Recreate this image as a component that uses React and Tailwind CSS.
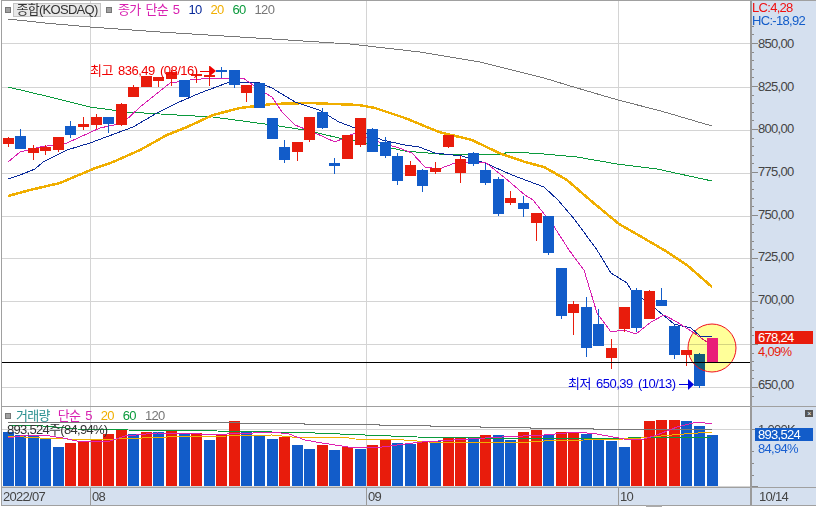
import React from "react";

const RED = "#e81c0c";
const BLUE = "#125cc9";
const left = (i) => Math.floor(3.1 + 12.57 * i);

// [bodyTop, bodyBottom, wickTop, wickBottom, colour]
const r = RED, b = BLUE;
const candles = [
  [138,143,137,146,r],[136,148,129,148,b],[148,152,145,159,r],[147,150,145,154,r],[137,149,137,151,r],
  [126,134,121,137,b],[124,126,117,129,r],[117,124,114,128,r],[117,123,117,132,b],[104,124,103,125,r],
  [87,96,85,96,r],[76,86,76,86,r],[77,80,77,86,r],[72,78,70,85,r],[80,96,80,96,b],
  [74,75,70,82,r],[75,76,66,85,r],[70,71,67,77,b],[70,84,70,87,b],[85,92,85,101,r],
  [83,107,83,107,b],[118,138,118,138,b],[147,159,140,162,b],[142,151,142,160,r],[117,139,117,141,r],
  [112,127,108,128,b],[163,165,158,173,b],[135,158,135,158,r],[118,144,118,146,r],[129,151,128,151,b],
  [142,155,137,157,b],[156,180,153,184,b],[165,175,161,175,r],[170,185,169,191,b],[168,171,162,173,r],
  [135,146,135,147,r],[159,172,156,182,r],[153,163,152,165,b],[170,182,164,184,b],[179,213,177,215,b],
  [198,202,191,204,r],[203,208,196,216,b],[213,222,213,240,r],[216,252,216,254,b],[268,315,268,318,b],
  [304,312,301,334,r],[307,347,297,356,b],[324,345,309,345,b],[348,357,339,368,r],[307,328,307,331,r],
  [290,327,288,331,b],[291,318,290,318,r],[300,305,288,305,b],[326,354,325,358,b],[350,354,350,365,r],
  [354,385,353,387,b],
];

const volTops = [
  [432,b],[435,b],[436,b],[439,b],[447,b],[443,r],[441,r],[439,r],[434,r],[429,r],
  [434,b],[432,r],[432,b],[430,r],[434,b],[433,r],[440,b],[435,r],[421,r],[432,b],
  [436,b],[439,b],[437,r],[445,b],[449,b],[445,r],[450,b],[447,r],[449,b],[445,r],
  [440,r],[443,b],[444,b],[441,r],[441,b],[437,r],[437,r],[437,b],[435,r],[435,b],
  [440,b],[432,r],[430,r],[435,b],[432,r],[432,r],[434,b],[440,b],[441,b],[447,b],
  [440,r],[421,r],[420,r],[420,r],[421,b],[426,b],[435,b],
];

const ma120 = "8,19 45,23 90,27 160,32 272,39 350,44 420,52 480,62 544,78 577,88 618,100 661,111 712,126";
const ma60 = "8,87 50,97 90,107 127,112 177,115 213,117 272,125 305,130 339,138 365,143 382,146 405,151 439,154 502,154 509,152 529,153 544,154 577,157 617,164 657,169 712,181";
const ma20 = "8,196 30,190 60,183 93,169 113,162 140,150 167,135 187,127 213,115 240,108 272,104 309,103 359,105 375,108 405,118 439,132 472,140 499,153 525,162 544,167 567,180 590,200 619,224 640,236 664,250 687,265 712,287";
const ma10 = "8,179 20,175 35,169 43,162 67,150 90,143 133,127 157,113 177,103 200,93 227,83 257,82 272,88 295,102 319,110 339,122 355,128 382,140 405,145 419,147 435,153 462,156 485,163 512,175 544,187 558,200 575,220 597,250 611,273 627,283 631,290 657,310 674,324 691,328 700,336 712,336";
const ma5 = "8,162 20,152 40,147 67,143 100,128 123,123 140,107 170,83 190,80 213,78 243,78 260,90 272,97 282,112 295,125 315,133 335,142 355,133 379,142 399,148 412,153 425,167 439,169 455,163 469,162 485,162 505,178 525,195 533,200 553,225 569,250 584,270 597,313 611,332 624,330 636,334 651,322 664,315 677,322 694,333 707,342";

const v120 = "8,422 232,422 240,423 304,423 304,424 379,424 379,425 430,425 430,426 480,426 480,427 530,427 530,428 593,428 593,429 712,429";
const v60 = "8,425 43,426 77,429 128,430 217,431 272,432 315,433 365,435 417,437 544,439 712,437";
const v20 = "8,436 40,438 67,439 117,439 167,437 227,436 272,435 292,437 342,437 355,439 404,440 429,442 492,442 529,442 544,441 624,439 641,438 661,436 684,434 712,432";
const v5 = "8,438 20,436 43,435 63,438 77,441 110,441 125,436 157,433 200,434 227,434 253,433 272,432 289,434 305,440 322,443 355,448 382,447 405,444 422,442 485,438 502,437 544,435 577,432 597,434 624,439 641,440 657,435 677,427 697,422 712,424";

const gridY = [43, 87, 130, 173, 216, 258, 301, 344, 387];
const gridX = [90, 366, 618];
const priceLabels = ["850,00", "825,00", "800,00", "775,00", "750,00", "725,00", "700,00", "675,00", "650,00"];

function Line({ points, color, width = 1 }) {
  return <polyline points={points} fill="none" stroke={color} strokeWidth={width} shapeRendering="crispEdges" />;
}

function Square() {
  return <span className="block w-[6px] h-[6px] bg-[#a0a0a0] border border-[#777] shrink-0" />;
}

function PriceChart() {
  return (
    <svg width="748" height="405" viewBox="2 1 748 405" className="block">
      <g shapeRendering="crispEdges">
        {gridY.map((y) => <rect key={y} x="2" y={y} width="748" height="1" fill="#d4d4d4" />)}
        {gridX.map((x) => <rect key={x} x={x} y="1" width="1" height="405" fill="#d4d4d4" />)}
        <rect x="2" y="362" width="748" height="1" fill="#000" />
      </g>
      <Line points={ma120} color="#777777" />
      <Line points={ma60} color="#0a9a3c" />
      <Line points={ma20} color="#f0ae00" width={2.5} />
      <Line points={ma10} color="#0a2a9a" />
      <Line points={ma5} color="#d81fb0" />
      <g shapeRendering="crispEdges">
        {candles.map(([t, bt, wt, wb, c], i) => (
          <g key={i}>
            <rect x={left(i) + 5} y={wt} width="1" height={wb - wt + 1} fill={c} />
            <rect x={left(i)} y={t} width="11" height={bt - t + 1} fill={c} />
          </g>
        ))}
      </g>
      <circle cx="712" cy="348" r="24" fill="#ffff99" className="mix-blend-multiply" />
      <circle cx="712" cy="348" r="24" fill="none" stroke="#f01020" strokeWidth="1" />
      <polyline points="691,328 700,336 712,336" fill="none" stroke="#0a2a9a" shapeRendering="crispEdges" />
      <rect x="707" y="338" width="11" height="25" fill="#e91e78" shapeRendering="crispEdges" />
      <rect x="2" y="362" width="748" height="1" fill="#000" shapeRendering="crispEdges" />
      <g fontSize="13" letterSpacing="-0.5" wordSpacing="2">
        <text x="90" y="75" fill="#f00000">최고 836,49 (08/16)</text>
        <text x="568" y="388" fill="#0000e0">최저 650,39 (10/13)</text>
      </g>
      <path d="M200 71H210" stroke="#f00000" fill="none" shapeRendering="crispEdges" />
      <path d="M210 66L216 71L210 76Z" fill="#f00000" />
      <path d="M679 384H688" stroke="#0000e0" fill="none" shapeRendering="crispEdges" />
      <path d="M688 379L694 384.500L688 390Z" fill="#0000e0" />
    </svg>
  );
}

function VolumeChart() {
  return (
    <svg width="748" height="80" viewBox="2 407 748 80" className="block">
      <g shapeRendering="crispEdges">
        <rect x="2" y="429" width="748" height="1" fill="#d4d4d4" />
        <rect x="2" y="486" width="748" height="1" fill="#d4d4d4" />
        {gridX.map((x) => <rect key={x} x={x} y="407" width="1" height="80" fill="#d4d4d4" />)}
        {volTops.map(([t, c], i) => (
          <rect key={i} x={left(i)} y={t} width="11" height={486 - t} fill={c} />
        ))}
      </g>
      <Line points={v120} color="#777777" />
      <Line points={v60} color="#0a9a3c" />
      <Line points={v20} color="#f0ae00" />
      <Line points={v5} color="#e020b0" />
    </svg>
  );
}

function PriceAxisTicks() {
  const ticks = [];
  for (let k = -2; k <= 41; k++) ticks.push(43 + k * 8.6);
  return (
    <svg width="10" height="405" viewBox="0 1 10 405" className="absolute left-0 top-0">
      <g shapeRendering="crispEdges">
        {ticks.map((y, i) => (
          <rect key={i} x="0" y={Math.round(y)} width={(i - 2) % 5 === 0 ? 6 : 2} height="1" fill="#8a8a8a" />
        ))}
      </g>
    </svg>
  );
}

export default function App() {
  return (
    <div className="w-[816px] h-[507px] overflow-hidden bg-white relative text-[13px] tracking-[-0.7px] leading-none font-['Liberation_Sans','Noto_Sans_CJK_KR',sans-serif]">
      <div className="border-t border-b border-[#a0a0a0] mb-px ml-px border-l flex flex-col">
        {/* price row */}
        <div className="flex h-[405px] border-b-0">
          <div className="relative w-[748px]">
            <PriceChart />
            <div className="absolute left-[3px] top-[1px] flex items-center h-[15px] whitespace-nowrap">
              <Square />
              <span className="ml-[2px] w-[88px] h-[14px] flex items-center justify-center bg-[#e8e8e8] border border-[#c4c4c4] text-[#333]">종합(KOSDAQ)</span>
              <span className="ml-[5px]"><Square /></span>
              <span className="ml-[6px] text-[#d81fb0] [word-spacing:2px]">종가 단순 5</span>
              <span className="ml-[9px] text-[#0a2a9a]">10</span>
              <span className="ml-[9px] text-[#f0ae00]">20</span>
              <span className="ml-[9px] text-[#0a9a3c]">60</span>
              <span className="ml-[9px] text-[#777]">120</span>
            </div>
          </div>
          <div className="relative flex-1 border-l-2 border-[#9a9a9a] bg-[#d5e0ef] flex flex-col pt-[21px] pl-[6px]">
            <PriceAxisTicks />
            <div className="absolute left-0 top-0">
              <div className="text-[#f01010] h-[13px] leading-[13px]">LC:4,28</div>
              <div className="text-[#125cc9] h-[13px] leading-[13px]">HC:-18,92</div>
            </div>
            {priceLabels.map((t, i) =>
              <div key={i} className="h-[43px] flex items-center text-[#444] whitespace-nowrap">{i === 7 ? "" : t}</div>
            )}
            <div className="absolute left-[3px] top-[330px] w-[58px] h-[13px] bg-[#e81c0c] text-white pl-[3px] flex items-center">678,24</div>
            <div className="absolute left-[6px] top-[344px] text-[#e81c0c]">4,09%</div>
          </div>
        </div>
        <div className="h-px bg-[#a0a0a0]" />
        {/* volume row */}
        <div className="flex h-[80px]">
          <div className="relative w-[748px]">
            <VolumeChart />
            <div className="absolute left-[3px] top-[2px] flex items-center h-[13px] whitespace-nowrap">
              <Square />
              <span className="ml-[5px] text-[#2a9090]">거래량</span>
              <span className="ml-[8px] text-[#d81fb0] [word-spacing:2px]">단순 5</span>
              <span className="ml-[9px] text-[#f0ae00]">20</span>
              <span className="ml-[9px] text-[#0a9a3c]">60</span>
              <span className="ml-[9px] text-[#777]">120</span>
            </div>
            <div className="absolute left-[5px] top-[16px] text-[#333] whitespace-nowrap">893,524주(84,94%)</div>
          </div>
          <div className="relative flex-1 border-l-2 border-[#9a9a9a] bg-[#d5e0ef] overflow-hidden">
            <span className="absolute right-[3px] top-[3px] w-[8px] h-[7px] bg-[#555] text-white text-[7px] leading-[7px] text-center">×</span>
            <span className="absolute left-[6px] top-[16px] text-[#444]">1,000K</span>
            <span className="absolute left-0 top-[22px] w-[6px] h-px bg-[#8a8a8a]" />
            <span className="absolute left-0 top-[44px] w-[2px] h-px bg-[#8a8a8a]" />
            <span className="absolute left-0 top-[56px] w-[2px] h-px bg-[#8a8a8a]" />
            <span className="absolute left-0 top-[68px] w-[2px] h-px bg-[#8a8a8a]" />
            <span className="absolute left-0 top-[79px] w-[6px] h-px bg-[#8a8a8a]" />
            <div className="absolute left-[3px] top-[21px] w-[58px] h-[13px] bg-[#125cc9] text-white pl-[3px] flex items-center">893,524</div>
            <div className="absolute left-[6px] top-[35px] text-[#1a60d0]">84,94%</div>
          </div>
        </div>
        <div className="h-px bg-[#a0a0a0]" />
        {/* time row */}
        <div className="flex h-[17px] bg-[#d5e0ef] text-[#444]">
          <div className="w-[88px] pl-px flex items-center">2022/07</div>
          <div className="w-[276px] border-l border-[#9a9a9a] pl-px flex items-center">08</div>
          <div className="w-[252px] border-l border-[#9a9a9a] pl-px flex items-center">09</div>
          <div className="w-[132px] border-l border-[#9a9a9a] pl-px flex items-center">10</div>
          <div className="flex-1 border-l-2 border-[#9a9a9a] pl-[7px] flex items-center">10/14</div>
        </div>
      </div>
      <span className="absolute left-[646px] top-[505px] w-[16px] h-[2px] bg-[#aaa]" />
    </div>
  );
}
